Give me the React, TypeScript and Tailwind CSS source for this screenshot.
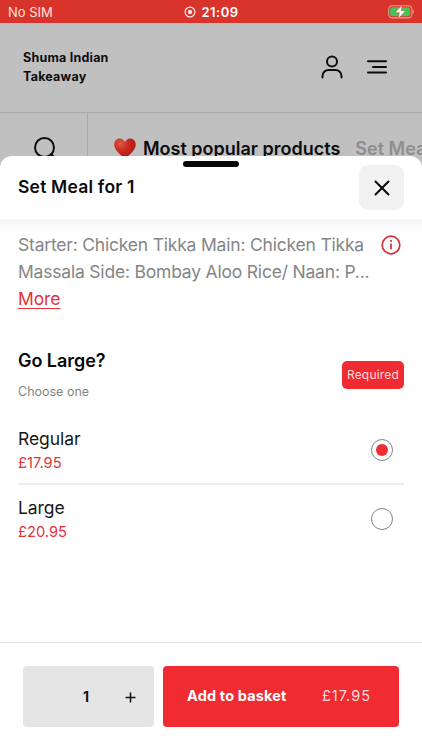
import { useState } from "react";

function StatusBar() {
  return (
    <div className="grid h-[23px] shrink-0 grid-cols-[1fr_auto_1fr] items-center bg-[#d9342c] pl-[8px] pr-[7px] text-[13px] text-white">
      <span className="pt-[1px] text-[13px] leading-none text-[#ffe3df]">No SIM</span>
      <span className="flex items-center gap-[5px]">
        <svg width="12" height="12" viewBox="0 0 12 12" fill="none" className="block">
          <circle cx="6" cy="6" r="4.9" stroke="#ffe9e6" strokeWidth="1.2" />
          <circle cx="6" cy="6" r="2.2" fill="#ffe9e6" />
        </svg>
        <span className="pt-[1px] text-[13px] font-semibold leading-none tracking-[0.5px]">21:09</span>
      </span>
      <svg width="28" height="14" viewBox="0 0 28 14" fill="none" className="block justify-self-end">
        <rect x="1.700" y="0.7" width="23.200" height="12.2" rx="3.6" stroke="#e9a08f" strokeWidth="1.1" />
        <rect x="3.200" y="2.3" width="20" height="9" rx="2.2" fill="#3fc659" />
        <path d="M26 4.8c1.2.5 1.2 3.4 0 4V4.8Z" fill="#e9a08f" />
        <path d="M15.300 .1 7.900 7.700h4.400L11.300 13.500l7.400-7.700h-4.500L15.300.1Z" fill="#fff" stroke="#d9342c" strokeWidth=".5" />
      </svg>
    </div>
  );
}

function Heart() {
  return (
    <svg width="22" height="21" viewBox="0 0 22 21" className="block shrink-0">
      <defs>
        <radialGradient id="heart" cx="0.3" cy="0.25" r="0.85">
          <stop offset="0" stopColor="#dc5a45" />
          <stop offset="0.4" stopColor="#cb2c20" />
          <stop offset="1" stopColor="#a81510" />
        </radialGradient>
      </defs>
      <path d="M11 4.2C9.8 1.7 8 .5 5.8.5 2.6.5.3 3 .3 6.5c0 5.3 5 9.6 10.7 14 5.7-4.400 10.700-8.700 10.700-14 0-3.500-2.300-6-5.500-6-2.200 0-4 1.200-5.200 3.700Z" fill="url(#heart)" />
    </svg>
  );
}

function ShopPage() {
  return (
    <div className="flex-1 bg-[#c0c0c0] text-[#0d0d0d]">
      <header className="flex h-[90px] items-center justify-between border-b border-[#a9a9a9] pb-[2px] pl-[23px] pr-[35px]">
        <h1 className="w-[100px] text-[12.5px] font-bold leading-[19px] tracking-[0.22px]">Shuma Indian Takeaway</h1>
        <div className="flex items-center gap-[24px]">
          <svg width="22" height="24" viewBox="0 0 22 24" fill="none" stroke="currentColor" strokeWidth="2" strokeLinecap="round" className="block">
            <circle cx="11" cy="6.500" r="5" />
            <path d="M1.500 22.500v-1.500a6 6 0 0 1 6-6h7a6 6 0 0 1 6 6v1.500" />
          </svg>
          <svg width="20" height="14" viewBox="0 0 20 14" fill="none" stroke="currentColor" strokeWidth="2" strokeLinecap="round" className="block">
            <path d="M1 1.300h18M6 7h13M1 12.600h18" />
          </svg>
        </div>
      </header>
      <nav className="flex h-[70px] overflow-hidden">
        <div className="flex w-[88px] shrink-0 items-center justify-center border-r border-[#a9a9a9] pb-px pl-[3px]">
          <svg width="24" height="24" viewBox="0 0 24 24" fill="none" stroke="currentColor" strokeWidth="2" strokeLinecap="round" className="block">
            <circle cx="11.500" cy="11.500" r="9.500" />
            <path d="m18.300 18.300 4 4" />
          </svg>
        </div>
        <div className="flex items-center whitespace-nowrap pl-[26px] text-[18px] font-semibold leading-[24px]">
          <Heart />
          <span className="pl-[7px] pt-[2px]">Most popular products</span>
          <span className="pl-[15px] pt-[2px] text-[#8e8e8e]">Set Meals</span>
        </div>
      </nav>
    </div>
  );
}

const options = [
  { name: "Regular", price: "£17.95" },
  { name: "Large", price: "£20.95" },
];

export default function App() {
  const [selected, setSelected] = useState("Regular");
  return (
    <div className="relative flex h-[750px] w-[422px] flex-col overflow-hidden bg-white font-['Inter',sans-serif]">
      <StatusBar />
      <ShopPage />
      <section className="absolute inset-x-0 bottom-0 flex h-[594px] flex-col rounded-t-[12px] bg-white">
        <div className="absolute left-[183px] top-[5px] h-[6px] w-[56px] rounded-full bg-[#080808]" />
        <header className="flex h-[63px] shrink-0 items-center justify-between pl-[18px] pr-[18px]">
          <h2 className="pb-[2px] text-[17.500px] font-semibold leading-[24px] tracking-[0.200px] text-[#0c0c0c]">Set Meal for 1</h2>
          <button className="flex size-[45px] items-center justify-center rounded-[9px] bg-[#f1f1f1]" aria-label="Close">
            <svg width="16" height="16" viewBox="0 0 16 16" stroke="#080808" strokeWidth="2" strokeLinecap="round" className="block">
              <path d="m1.500 1.500 13 13M14.500 1.500l-13 13" />
            </svg>
          </button>
        </header>
        <div className="h-[12px] shrink-0 bg-gradient-to-b from-[#f4f4f4] to-white" />

        <div className="flex items-start justify-between pl-[18px] pr-[21px] text-[17.500px] leading-[27px] text-[#858585]">
          <p className="whitespace-nowrap">
            <span className="block tracking-[-0.2px]">Starter: Chicken Tikka Main: Chicken Tikka</span>
            <span className="block tracking-[-0.2px]">Massala Side: Bombay Aloo Rice/ Naan: P...</span>
            <a className="tracking-[-0.1px] text-[#e2323a] underline decoration-1 underline-offset-[3px]">More</a>
          </p>
          <svg width="20" height="20" viewBox="0 0 20 20" fill="none" stroke="#d83038" strokeWidth="1.700" className="mt-[4px] block shrink-0">
            <circle cx="10" cy="10" r="8.800" />
            <path d="M10 8.500v6M10 5v2" />
          </svg>
        </div>

        <div className="mt-[35px] flex items-center justify-between pl-[18px] pr-[18px]">
          <div>
            <h3 className="text-[18px] font-semibold leading-[28px] tracking-[-0.05px] text-[#080808]">Go Large?</h3>
            <p className="mt-[7px] text-[12.500px] leading-[20px] tracking-[0px] text-[#858585]">Choose one</p>
          </div>
          <span className="mt-px flex h-[28px] w-[62px] items-center justify-center rounded-[5px] bg-[#f02b32] text-[12px] tracking-[0.2px] text-[#ffdcdc]">Required</span>
        </div>

        <div className="mt-[15px] pl-[18px] pr-[18px]">
          {options.map((option, i) => (
            <label key={option.name} className={`flex items-center justify-between pr-[11px] ${i === 0 ? "h-[68px] border-b-2 border-[#eeeeee]" : "h-[68px]"}`}>
              <span className="flex flex-col">
                <span className="text-[17.500px] leading-[26px] tracking-[-0.05px] text-[#171717]">{option.name}</span>
                <span className="text-[14.700px] leading-[23px] text-[#e2343b]">{option.price}</span>
              </span>
              <input type="radio" name="size" className="sr-only" checked={selected === option.name} onChange={() => setSelected(option.name)} />
              <span className="flex size-[22px] items-center justify-center rounded-full border border-[#858585]">
                {selected === option.name && <span className="size-[12px] rounded-full bg-[#f02b32]" />}
              </span>
            </label>
          ))}
        </div>

        <footer className="mt-auto flex h-[108px] shrink-0 gap-[9px] border-t border-[#e2e2e2] pl-[23px] pr-[23px] pt-[23px] text-[15px]">
          <div className="grid h-[61px] w-[131px] grid-cols-3 items-center rounded-[4px] bg-[#e5e5e5] text-center text-[#111111]">
            <span />
            <span className="pb-[1px] pr-[5px] text-[14px] font-bold">1</span>
            <svg width="11" height="11" viewBox="0 0 11 11" stroke="#111111" strokeWidth="1.500" className="ml-[15px] mt-px block">
              <path d="M5.500 .5v10M.5 5.500h10" />
            </svg>
          </div>
          <button className="flex h-[61px] flex-1 items-center justify-between rounded-[4px] bg-[#f02b32] pb-px pl-[24px] pr-[28px] text-white">
            <span className="text-[14.500px] font-bold tracking-[0.15px]">Add to basket</span>
            <span className="text-[14.500px] tracking-[1px] text-[#ffdcdc]">£17.95</span>
          </button>
        </footer>
      </section>
    </div>
  );
}
